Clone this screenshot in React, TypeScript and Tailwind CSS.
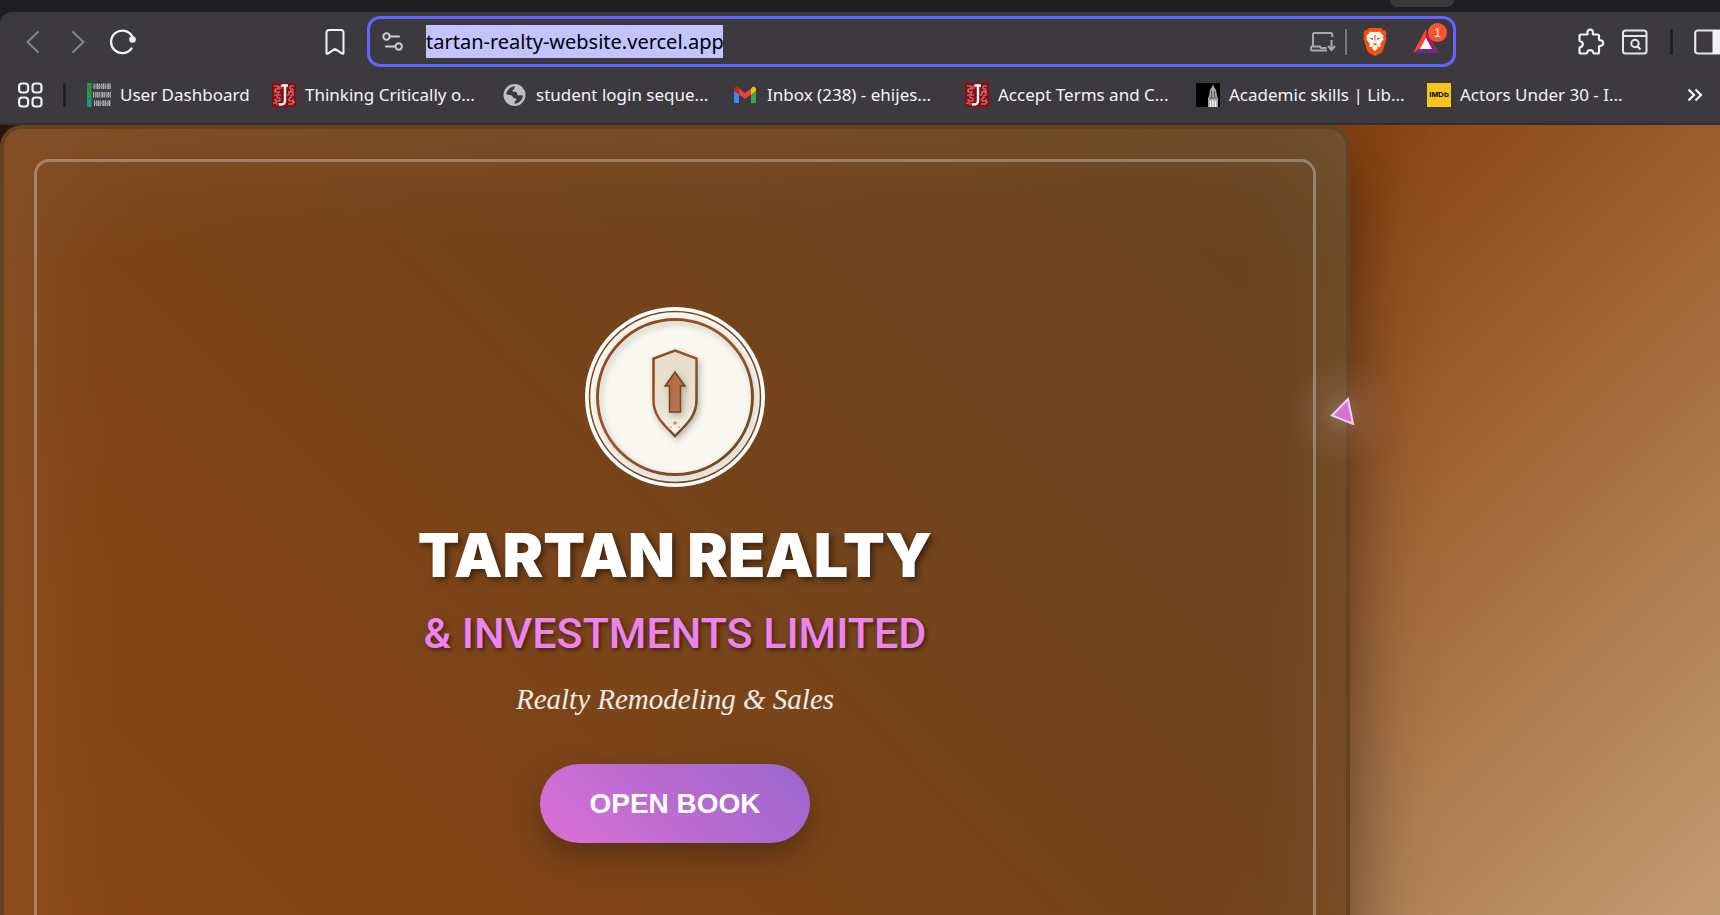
import React from "react";

function JIcon() {
  return (
    <svg width="24" height="24" viewBox="0 0 24 24" className="shrink-0" aria-hidden="true">
      <rect width="24" height="24" fill="#8f0a10" />
      <g fill="none" stroke="#cf9092" strokeWidth="1">
        <path d="M2 3h4v3H3v3h5M2 12h3v3h3v3H4v3h4M6 9v3h3M2 19v2" />
        <path d="M9 2v4M22 3h-4v3h3v3h-5M22 12h-3v3h-2v3h4v3h-5M17 9v3h-2M22 18v2" />
        <path d="M3 7v2M7 3v4M20 10h2M19 7v2M5 17H2M20 17h2" />
      </g>
      <path d="M9.500 2.500h6.500M13 3v14.500c0 3-1.500 4.300-6 4" fill="none" stroke="#fff" strokeWidth="2.400" />
    </svg>
  );
}

function UniversityIcon() {
  return (
    <svg width="24" height="24" viewBox="0 0 24 24" className="shrink-0" aria-hidden="true">
      <rect width="24" height="24" fill="#3f3d42" />
      <rect width="4.500" height="24" fill="#12a150" />
      <path d="M1 3l3 8M1 14l3 8" stroke="#b3423a" strokeWidth="1" />
      <path d="M0 17h4v6H1z" fill="#1c8fa0" />
      <g stroke="#b9b9bc" strokeWidth="5.500" strokeDasharray="1.100 1.100 .8 .5 1.400 .7">
        <path d="M6.500 3.200H24M6 11.800H24M7 20.200H24" />
      </g>
      <g stroke="#8e8e92" strokeWidth=".9">
        <path d="M6.500 3.500H24M6 12H24M7 20.500H24" />
      </g>
    </svg>
  );
}

function GlobeIcon() {
  return (
    <svg width="24" height="24" viewBox="0 0 24 24" className="shrink-0" aria-hidden="true">
      <circle cx="11.500" cy="12" r="11" fill="#bdc1c6" />
      <path
        d="M3 11c1.500-4.500 4.500-7.500 9-7.800-1 1.600 0 2.300-1.600 3.200-1.500.8-1 2.400.6 2.300 2.300-.2 3.200.6 3 2.300 0 1.400 1.400 1.500 3 1.300l3 .2c-.5 4.500-4 8-8.500 8.300-.4-2 .6-2.600 1.600-3.400.8-.8.300-2-1-2.200-2-.2-2.300-.7-2.700-2.100-.5-1.500-3.400-.8-6.400-2.100z"
        fill="#3c3a3f"
      />
    </svg>
  );
}

function GmailIcon() {
  return (
    <svg width="24" height="24" viewBox="0 0 24 24" className="shrink-0" aria-hidden="true">
      <path d="M0 7.500v11C0 19.300.7 20 1.500 20H5V10z" fill="#4285f4" />
      <path d="M22 7.500v11c0 .8-.7 1.500-1.500 1.500H17V10z" fill="#34a853" />
      <path d="M17 6v5.500l5-3.700V6c0-2-2.300-3-3.800-1.900z" fill="#fbbc04" />
      <path d="M5 11.500V5.500l6 4.500 6-4.500v6L11 16z" fill="#ea4335" />
      <path d="M0 6v1.800l5 3.700V5.300L3.800 4.100C2.300 3 0 4 0 6z" fill="#c5221f" />
    </svg>
  );
}

function LibraryIcon() {
  return (
    <svg width="24" height="24" viewBox="0 0 24 24" className="shrink-0" aria-hidden="true">
      <rect width="24" height="24" fill="#000" />
      <path d="M17 1l1 3 2 3 1 6 1 2v9H12v-9l1-2 1-6 2-3z" fill="#a9a9a9" />
      <path d="M14.500 24v-6M17 24v-7M19.500 24v-6" stroke="#fff" strokeWidth="1.200" />
      <path d="M15.500 8v6M18.500 8v6M13 15h8" stroke="#4a4a4a" strokeWidth="1" />
    </svg>
  );
}

function ImdbIcon() {
  return (
    <span className="flex size-6 shrink-0 items-center justify-center bg-[#f5c518] font-['Liberation_Sans'] text-[8px] font-bold text-black">
      IMDb
    </span>
  );
}

const bookmarks = [
  { label: "User Dashboard", icon: <UniversityIcon />, width: "w-[185px]" },
  { label: "Thinking Critically o...", icon: <JIcon />, width: "w-[231px]" },
  { label: "student login seque...", icon: <GlobeIcon />, width: "w-[231px]" },
  { label: "Inbox (238) - ehijes...", icon: <GmailIcon />, width: "w-[231px]" },
  { label: "Accept Terms and C...", icon: <JIcon />, width: "w-[231px]" },
  { label: "Academic skills | Lib...", icon: <LibraryIcon />, width: "w-[231px]" },
  { label: "Actors Under 30 - I...", icon: <ImdbIcon />, width: "w-[231px]" },
];

function Toolbar() {
  return (
    <div className="flex h-[59px] items-center">
      <nav className="flex w-[367px] shrink-0 items-center pl-[18px]" aria-label="History">
        <button aria-label="Back" className="flex w-[30px] justify-center">
          <svg width="14" height="24" viewBox="0 0 14 24" fill="none" stroke="#87868a" strokeWidth="2">
            <path d="M12.500 1.500L1.500 12l11 10.500" />
          </svg>
        </button>
        <button aria-label="Forward" className="ml-[15px] flex w-[30px] justify-center">
          <svg width="14" height="24" viewBox="0 0 14 24" fill="none" stroke="#87868a" strokeWidth="2">
            <path d="M1.500 1.500L12.500 12l-11 10.500" />
          </svg>
        </button>
        <button aria-label="Reload" className="ml-[15px] flex w-[30px] justify-center">
          <svg width="28" height="26" viewBox="0 0 28 26" fill="none">
            <path d="M23.300 7.500A11.300 11.300 0 1 0 22.500 19.500" stroke="#f4f4f5" strokeWidth="2.300" strokeLinecap="round" />
            <circle cx="23.500" cy="10.500" r="3.300" fill="#f4f4f5" />
          </svg>
        </button>
        <button aria-label="Bookmark this page" className="mr-[22px] ml-auto">
          <svg width="20" height="26" viewBox="0 0 20 26" fill="none" stroke="#f4f4f5" strokeWidth="2" strokeLinejoin="round">
            <path d="M1.500 3.500a2.500 2.500 0 0 1 2.500-2.500h12a2.500 2.500 0 0 1 2.500 2.500v20.500c0 .8-.8 1-1.300.6L10 19.800l-7.200 4.800c-.5.4-1.300.2-1.300-.6z" />
          </svg>
        </button>
      </nav>
      <div className="flex h-[51px] min-w-0 flex-1 items-center rounded-[13px] border-[3px] border-[#6563ff] pl-3">
        <button aria-label="Site settings" className="shrink-0">
          <svg width="22" height="20" viewBox="0 0 22 20" fill="none" stroke="#cfced2" strokeWidth="2">
            <circle cx="4.500" cy="4.500" r="3.200" />
            <path d="M8 4.500h9M4 14.500h9" strokeLinecap="round" />
            <circle cx="16.700" cy="14.500" r="3.200" />
          </svg>
        </button>
        <div className="ml-[22px] flex min-w-0 flex-1">
          <input
            aria-label="Address"
            readOnly
            defaultValue="tartan-realty-website.vercel.app"
            className="h-[33px] w-[297px] bg-[#c3c3ff] font-['Noto_Sans',sans-serif] text-[20px] text-black outline-none"
          />
        </div>
        <button aria-label="Install app" className="shrink-0">
          <svg width="26" height="20" viewBox="0 0 26 20" fill="none" stroke="#a9a8ac" strokeWidth="2">
            <path d="M3 12V2.500C3 1.700 3.500 1 4.300 1H21c.8 0 1.300.7 1.300 1.500V5" />
            <path d="M1 14.500h9l1 1.500h5.500M1 14.500V17c0 .8.500 1.500 1.300 1.500H17M3 11v3" />
            <path d="M21.500 8v9M18 14l3.500 4 3.500-4" />
          </svg>
        </button>
        <span className="ml-[9px] h-[26px] w-0.5 shrink-0 bg-[#77767a]" />
        <button aria-label="Brave Shields" className="ml-4 shrink-0">
          <svg width="24" height="29" viewBox="0 0 24 29">
            <path d="M6 1h12l2.500 2.500 2-.2L23.500 7l-.8 2 .8 2.500L20 23c-.5 1.500-1.500 2.500-3 3.500L12 29l-5-2.500c-1.500-1-2.500-2-3-3.500L.5 11.500 1.300 9l-.8-2 1-3.700 2 .2z" fill="#fb4f0f" />
            <path
              d="M7.500 4.500l2.500.7 2-.5 2 .5 2.500-.7 4 4.500-.5 1.500.5 2-3 3.800c-.5.700 0 1.500.3 2.200-.2 1.700-2 2-2.300 1.500l-2-1.500 1.500 3-3 2.500-3-2.500 1.500-3-2 1.500c-.5.400-2.100.2-2.300-1.500.300-.7.800-1.500.300-2.200L3.500 12.500l.5-2L3.500 9z"
              fill="#fff"
            />
            <path d="M5.500 10.500l4.800.8-.6 2zM18.500 10.500l-4.800.8.6 2zM9.500 17l2.500 1.400 2.500-1.400-2.500-.8zM11.300 8h1.400l-.3 5.500h-.8z" fill="#fb4f0f" />
          </svg>
        </button>
        <button aria-label="Brave Rewards" className="relative mr-3.5 ml-[26px] shrink-0">
          <svg width="26" height="25" viewBox="0 0 26 25">
            <path d="M13 0L0 24l8.500-4.500L13 11z" fill="#ff4724" />
            <path d="M13 0l13 24-8.500-4.500L13 11z" fill="#9e1f63" />
            <path d="M0 24h26l-8-5H8z" fill="#662d91" />
            <path d="M13 9l6 11H7z" fill="#fff" />
          </svg>
          <span className="absolute -top-1.5 -right-2 flex size-[19px] items-center justify-center rounded-full bg-[#fb542b] font-['Liberation_Sans',sans-serif] text-xs text-white">
            1
          </span>
        </button>
      </div>
      <div className="ml-[121px] flex shrink-0 items-center">
        <button aria-label="Extensions">
          <svg width="28" height="28" viewBox="0 0 28 28" fill="none" stroke="#f0f0f2" strokeWidth="2.200" strokeLinejoin="round">
            <path d="M4 6.500h6c.8 0 .7-.7.5-1.500-.3-2 1-3.500 2.700-3.500S16.200 3 15.900 5c-.2.800-.3 1.500.5 1.500h4.100c.9 0 1.500.6 1.500 1.500v3.500c0 .8.700.8 1.400.8 1.700.1 2.800 1.300 2.800 2.800s-1.100 2.700-2.800 2.800c-.7 0-1.400 0-1.400.8V24c0 .9-.6 1.500-1.500 1.500h-3.500c-.8 0-.7-.8-.9-1.400-.3-1.200-1.400-1.900-2.900-1.900s-2.600.7-2.900 1.900c-.2.600-.1 1.400-.9 1.400H4c-.9 0-1.500-.6-1.500-1.500v-4c0-.8.700-.9 1.300-1.100 1.300-.4 2-1.500 2-2.700s-.7-2.300-2-2.700c-.6-.2-1.300-.3-1.300-1.100V8c0-.9.600-1.500 1.500-1.500z" />
          </svg>
        </button>
        <button aria-label="Search tabs" className="ml-[17px]">
          <svg width="26" height="26" viewBox="0 0 26 26" fill="none" stroke="#e6e6e9" strokeWidth="2">
            <rect x="1" y="1.500" width="23.500" height="23" rx="2.500" />
            <path d="M1 7h23.500" />
            <circle cx="13" cy="14.500" r="3.700" />
            <path d="M15.500 17.500l3 3" strokeWidth="2.300" />
          </svg>
        </button>
        <span className="ml-[22px] h-[26px] w-[3px] rounded-full bg-[#222126]" />
        <button aria-label="Sidebar" className="ml-[21px]">
          <svg width="26" height="26" viewBox="0 0 26 26">
            <rect x="1.200" y="1.500" width="26" height="23" rx="2.500" fill="none" stroke="#e6e6e9" strokeWidth="2.200" />
            <path d="M18.500 1H26v24h-7.500z" fill="#f0f0f2" />
          </svg>
        </button>
      </div>
    </div>
  );
}

function BookmarksBar() {
  return (
    <div className="flex h-[52px] items-center pr-[17px] pb-1 pl-[18px]">
      <button aria-label="Apps" className="shrink-0">
        <svg width="25" height="26" viewBox="0 0 25 26" fill="none" stroke="#f0f0f2" strokeWidth="2.200">
          <rect x="1.100" y="1.500" width="9" height="9" rx="3" />
          <rect x="14.500" y="1.500" width="9" height="9" rx="3" />
          <rect x="1.100" y="15.500" width="9" height="9" rx="3" />
          <rect x="14.500" y="15.500" width="9" height="9" rx="3" />
        </svg>
      </button>
      <span className="ml-5 h-6 w-[3px] shrink-0 rounded-full bg-[#222126]" />
      <nav className="ml-[21px] flex min-w-0 flex-1" aria-label="Bookmarks">
        {bookmarks.map((b) => (
          <a key={b.label} href="#" className={`flex items-center gap-[9px] whitespace-nowrap ${b.width}`}>
            {b.icon}
            <span>{b.label}</span>
          </a>
        ))}
      </nav>
      <button aria-label="More bookmarks" className="shrink-0">
        <svg width="16" height="14" viewBox="0 0 16 14" fill="none" stroke="#f4f4f5" strokeWidth="2.200">
          <path d="M1.500 1.500L7 7l-5.500 5.500M8.500 1.500L14 7l-5.500 5.500" />
        </svg>
      </button>
    </div>
  );
}

function Crest() {
  return (
    <svg width="180" height="180" viewBox="0 0 180 180" className="shrink-0" role="img" aria-label="Tartan Realty crest">
      <defs>
        <linearGradient id="ring" x1="0" y1="0" x2="1" y2="1">
          <stop offset="0" stopColor="#8b4513" />
          <stop offset=".45" stopColor="#a0522d" />
          <stop offset="1" stopColor="#654321" />
        </linearGradient>
        <linearGradient id="arrow" x1="0" y1="0" x2="1" y2="1">
          <stop offset="0" stopColor="#b0653f" />
          <stop offset="1" stopColor="#b47a5c" />
        </linearGradient>
        <linearGradient id="field" x1="0" y1="0" x2="0" y2="1">
          <stop offset="0" stopColor="#e6dccb" />
          <stop offset=".6" stopColor="#e9e0d2" />
          <stop offset="1" stopColor="#f7f4ea" />
        </linearGradient>
        <filter id="soft" x="-20%" y="-20%" width="140%" height="140%">
          <feDropShadow dx="2" dy="3" stdDeviation="3" floodColor="#000" floodOpacity=".25" />
        </filter>
      </defs>
      <circle cx="90" cy="90" r="90" fill="#fff" />
      <circle cx="90" cy="90" r="85.500" fill="#f8f8f0" stroke="#7a4419" strokeWidth="1.500" />
      <circle cx="90" cy="90" r="77.500" fill="none" stroke="url(#ring)" strokeWidth="3" filter="url(#soft)" />
      <path
        d="M90 43.500L111.500 51.500V93C111.500 109 102 117 90 129C78 117 68.500 109 68.500 93V51.500Z"
        fill="url(#field)"
        stroke="url(#ring)"
        strokeWidth="2.500"
        filter="url(#soft)"
      />
      <path d="M90 65L100 79H95.500V105H84.500V79H80Z" fill="url(#arrow)" stroke="#7a4419" strokeWidth="1.500" filter="url(#soft)" />
      <circle cx="90" cy="116" r="1.800" fill="#c08c6e" />
      <circle cx="86" cy="120" r=".9" fill="#c9a78f" />
      <circle cx="94" cy="120" r=".9" fill="#c9a78f" />
    </svg>
  );
}

function Cover() {
  return (
    <section className="flex min-h-[900px] w-[1350px] rounded-[22px] border-4 border-[#654321] bg-[linear-gradient(45deg,#8b4513,#654321)] p-[30px] shadow-[0_30px_75px_rgba(0,0,0,0.5),inset_0_0_150px_rgba(255,255,255,0.1)]">
      <div className="flex flex-1 flex-col items-center justify-center rounded-[15px] border-[3px] border-white/30 text-center">
        <Crest />
        <h1 className="mt-[30px] font-[Inter,sans-serif] text-[61px] leading-[76px] font-black text-white [text-shadow:3px_3px_6px_rgba(0,0,0,0.5)]">
          TARTAN REALTY
        </h1>
        <p className="mt-3 font-[Roboto,sans-serif] text-[43px] leading-[56px] font-medium text-[#ee82ee] [text-shadow:2px_2px_4px_rgba(0,0,0,0.5)]">
          &amp; INVESTMENTS LIMITED
        </p>
        <p className="mt-5 font-['Liberation_Serif',serif] text-[29px] leading-[36px] text-white/90 italic">
          Realty Remodeling &amp; Sales
        </p>
        <button className="mt-[47px] h-[79px] w-[270px] rounded-full bg-[linear-gradient(45deg,#da70d6,#9966cc)] font-['Liberation_Sans',sans-serif] text-[28px] font-bold text-white shadow-[0_12px_30px_rgba(0,0,0,0.3)]">
          OPEN BOOK
        </button>
      </div>
    </section>
  );
}

function Pointer() {
  return (
    <svg width="140" height="140" viewBox="0 0 140 140" className="pointer-events-none absolute top-[217px] left-[1271px]" aria-hidden="true">
      <defs>
        <radialGradient id="glow">
          <stop offset="0" stopColor="#fff" stopOpacity=".2" />
          <stop offset=".4" stopColor="#fde" stopOpacity=".07" />
          <stop offset="1" stopColor="#fde" stopOpacity="0" />
        </radialGradient>
      </defs>
      <circle cx="72" cy="71" r="56" fill="url(#glow)" />
      <path d="M61 73.500L77 57L82 82Z" fill="#da70d6" stroke="#f3d3f1" strokeWidth="2" />
    </svg>
  );
}

export default function App() {
  return (
    <div className="flex h-screen flex-col overflow-hidden bg-[#1f1e23]">
      <div className="flex h-3 shrink-0 justify-end pr-[266px]">
        <span className="h-[7px] w-16 rounded-b-lg bg-[#3c3a3f]" />
      </div>
      <header className="shrink-0 rounded-tl-[12px] border-b-2 border-[#312f34] bg-[#3c3a3f] font-['Noto_Sans',sans-serif] text-[17px] text-[#f4f4f5]">
        <Toolbar />
        <BookmarksBar />
      </header>
      <main className="relative min-h-0 flex-1 overflow-hidden bg-[linear-gradient(135deg,#2c1810_0%,#8b4513_56%,#d2b48c_112%)]">
        <Cover />
        <Pointer />
      </main>
    </div>
  );
}
